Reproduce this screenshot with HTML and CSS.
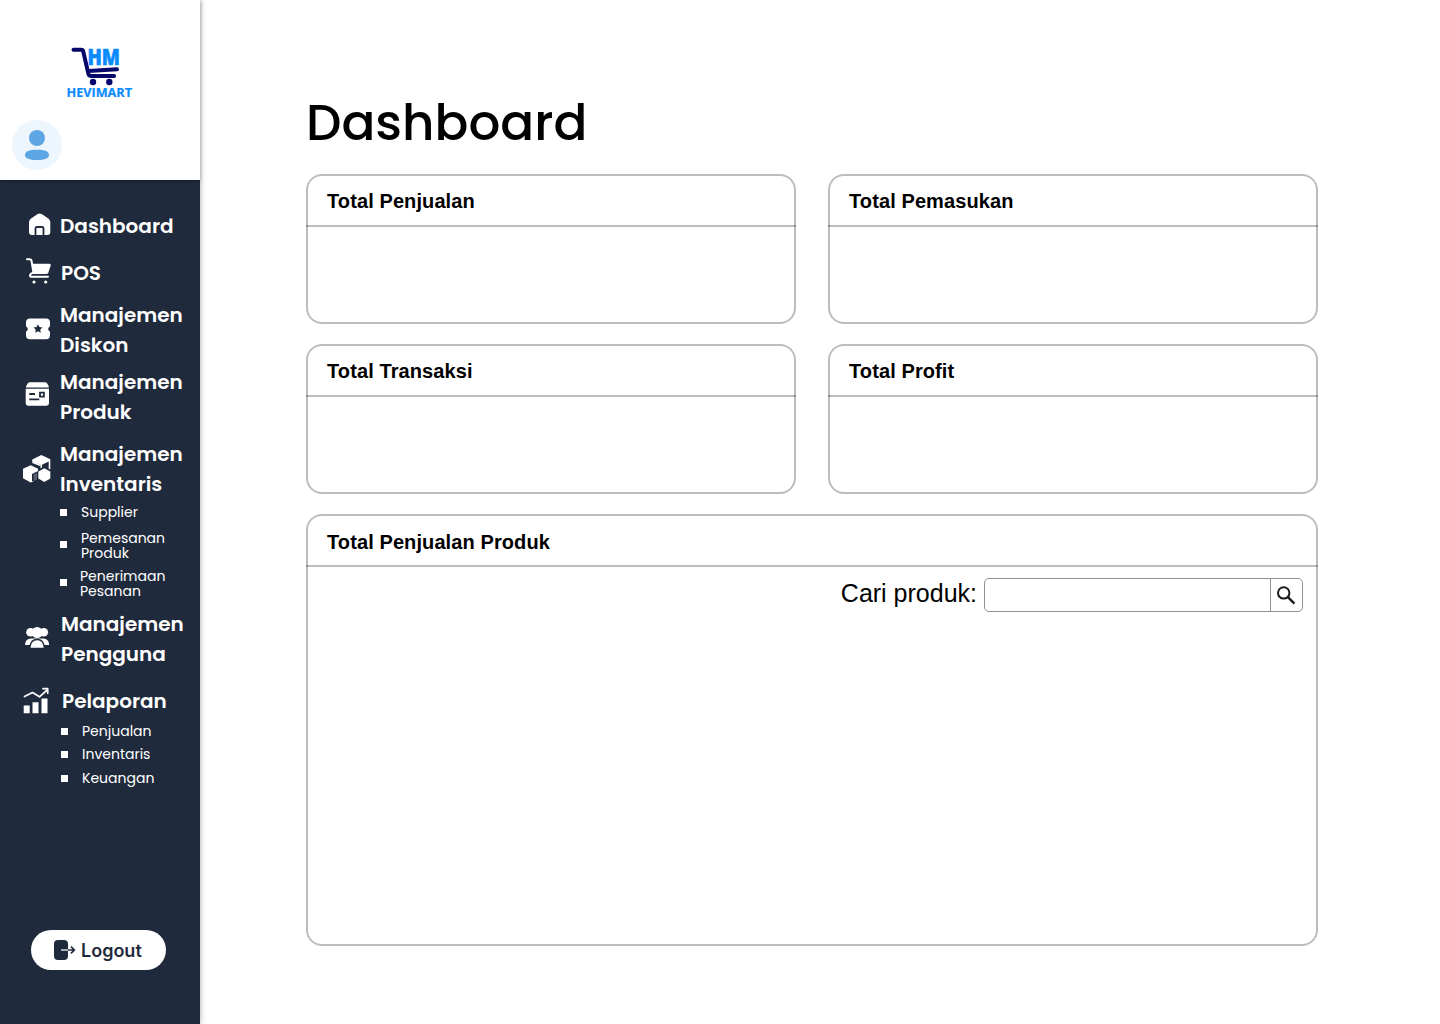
FILE: index.html
```html
<!DOCTYPE html>
<html lang="id">
<head>
<meta charset="utf-8">
<title>Hevimart - Dashboard</title>
<link rel="stylesheet" href="styles.css">
</head>
<body>
<div class="app">
  <aside class="sidebar">
    <header class="brand">
      <svg class="logo" viewBox="0 0 80 62" role="img" aria-label="Hevimart">
        <path d="M13.500 9.700h7.700q1.600 0 2 1.600l5.200 22.600q.5 2 2.400 2h23.300M28.600 31l28.400-1.700" fill="none" stroke="#07076b" stroke-width="4" stroke-linecap="round" stroke-linejoin="round"/>
        <circle cx="33" cy="42" r="3.200" fill="#07076b"/>
        <circle cx="49.300" cy="42" r="3.200" fill="#07076b"/>
        <text class="logo-mark" x="27.500" y="25.300" textLength="32.500" lengthAdjust="spacingAndGlyphs">HM</text>
        <text class="logo-name" x="6.500" y="57.200" textLength="65.500" lengthAdjust="spacingAndGlyphs">HEVIMART</text>
      </svg>
      <svg class="avatar" viewBox="0 0 50 50">
        <circle cx="25" cy="25" r="25" fill="#edf5fd"/>
        <circle cx="25" cy="18" r="8" fill="#5ca6e4"/>
        <path d="M13 35c0-3.500 4-5.200 12-5.200s12 1.700 12 5.200-4 5-12 5-12-1.500-12-5z" fill="#5ca6e4"/>
      </svg>
    </header>

    <nav class="nav">
      <a class="item">
        <svg class="icon" viewBox="0 0 36 30"><path fill="#fff" d="M17.700 3q2-1.200 4 0l6.600 4.400q2 1.400 2 3.800v9.800q0 3-3 3H12q-3 0-3-3v-9.800q0-2.400 2-3.800z"/><path class="cut" d="M15.500 24.500v-7q0-1.500 1.500-1.500h5q1.500 0 1.500 1.500v7"/></svg>
        <span class="label">Dashboard</span>
      </a>
      <a class="item item-pos">
        <svg class="icon" viewBox="0 0 36 30"><path fill="#fff" d="M11.500 5.700H29.500q1.700 0 1.200 1.700l-2.300 7.100q-.6 1.500-2.200 1.500H13.500z"/><path class="line" d="M7 1.200h2.700q1.400 0 1.800 1.400L13.500 15h-1q-2 .5-2.500 2.200 0 1.600 1.800 1.600H28"/><circle cx="14" cy="24" r="1.600" fill="#fff"/><circle cx="25.700" cy="24" r="1.600" fill="#fff"/></svg>
        <span class="label label-in">POS</span>
      </a>
      <a class="item item-diskon">
        <svg class="icon" viewBox="0 0 36 30"><path fill="#fff" d="M10 3.500h16q4 0 4 4v3.800l-1.700 1.700v2l1.700 1.700v3.600q0 4-4 4H10q-4 0-4-4v-3.600l1.700-1.700v-2L6 11.300V7.500q0-4 4-4z"/><path fill="#1f2a3c" d="M18 9.200l1.400 2.800 3.100.4-2.200 2.200.5 3.100-2.800-1.500-2.800 1.500.5-3.100-2.200-2.200 3.100-.4z"/></svg>
        <span class="label">Manajemen Diskon</span>
      </a>
      <a class="item item-produk">
        <svg class="icon" viewBox="0 0 36 30"><path fill="#fff" d="M10 .2h15q1.500 0 2.200 1.200l1.400 2.600.3 1.400H5.900l.3-1.400 1.500-2.600Q8.400.2 10 .2zM5.700 6.800H29v14.500q0 2.400-2.400 2.400H8.100q-2.400 0-2.400-2.400z"/><path class="cut" d="M9.300 12H15M9.300 17.300h10M20 10.600h3.900v4.100H20z"/></svg>
        <span class="label">Manajemen Produk</span>
      </a>
      <a class="item item-inventaris">
        <svg class="icon" viewBox="0 0 36 30"><path fill="#fff" d="M21.300 1L30.300 5.200V15.500L28.700 14.700V7.500L22 10.800V13.500l-1.500.8v-3.500L12.300 7V5.400z"/><path fill="#fff" d="M12.300 6.500l8.200 4.200v1.500L12.300 9zM10.700 11.200l7.300 3.500v2.200l-6 3v7l1.600.4-2.900 1.200L3 24.300v-9.500z"/><path fill="#fff" d="M13.600 20.500l3.400-1.700v6.700l-3.400 1.800z" opacity=".25"/><path fill="#fff" d="M24.300 14.300l6 3.200v7.100l-6 3.300-6-3.300v-7.100z"/></svg>
        <span class="label">Manajemen Inventaris</span>
      </a>
      <ul class="sub sub-inventaris">
        <li>Supplier</li>
        <li class="two-line">Pemesanan<br>Produk</li>
        <li class="two-line li-penerimaan">Penerimaan<br>Pesanan</li>
      </ul>
      <a class="item item-pengguna">
        <svg class="icon" viewBox="0 0 36 30"><g fill="#fff"><circle cx="10.500" cy="8.300" r="4.300"/><circle cx="23.800" cy="8.300" r="4.300"/><path d="M5 21q.3-6.500 6-6.500h12.200q5.700 0 6 6.500z"/></g><path d="M10.300 23.500q0-8 6.800-8t6.800 8z" fill="#1f2a3c" stroke="#1f2a3c" stroke-width="1.500"/><circle cx="17.100" cy="8.500" r="5.600" fill="#fff"/><path d="M10.500 23.700q.5-7.500 6.600-7.500t6.600 7.500z" fill="#fff"/></svg>
        <span class="label label-in">Manajemen Pengguna</span>
      </a>
      <a class="item item-pelaporan">
        <svg class="icon" viewBox="0 0 36 30"><path fill="#fff" d="M3.700 19.500h6v7.800h-6zM12.500 16.300h6v11h-6zM21.500 12.500h6v14.800h-6z"/><path class="line line-chart" d="M4.500 10.500l8-4 7 4.300L27.500 3.500M23 2.700h4.700v4.500"/></svg>
        <span class="label label-in2">Pelaporan</span>
      </a>
      <ul class="sub sub-pelaporan">
        <li>Penjualan</li>
        <li>Inventaris</li>
        <li class="li-keuangan">Keuangan</li>
      </ul>
    </nav>

    <button class="logout">
      <svg class="logout-icon" viewBox="0 0 22 22"><rect x="0" y="1" width="14" height="20" rx="4" fill="#1f2a3c"/><path d="M7 11h7" stroke="#c5c8cd" stroke-width="1.700"/><path d="M14 11h6M17 7.700l3.300 3.300-3.300 3.300" fill="none" stroke="#1f2a3c" stroke-width="1.700"/></svg>
      <span>Logout</span>
    </button>
  </aside>

  <main class="main">
    <h1 class="title">Dashboard</h1>
    <div class="cards">
      <section class="card"><h2 class="card-head">Total Penjualan</h2></section>
      <section class="card"><h2 class="card-head">Total Pemasukan</h2></section>
      <section class="card"><h2 class="card-head">Total Transaksi</h2></section>
      <section class="card"><h2 class="card-head">Total Profit</h2></section>
      <section class="card card-wide">
        <h2 class="card-head">Total Penjualan Produk</h2>
        <form class="search">
          <label class="search-label" for="q">Cari produk:</label>
          <div class="search-box">
            <input class="search-input" id="q" type="text">
            <button class="search-btn" type="button" aria-label="Cari">
              <svg viewBox="0 0 20 20" width="20" height="20"><circle cx="7.700" cy="7.900" r="5.700" fill="none" stroke="#1a1a1a" stroke-width="2"/><path d="M11.900 12.100l6.500 6.500" stroke="#1a1a1a" stroke-width="2.400"/></svg>
            </button>
          </div>
        </form>
      </section>
    </div>
  </main>
</div>
</body>
</html>
```
FILE: styles.css
```css
* { box-sizing: border-box; }
body { margin: 0; background: #fff; color: #000; font-family: Poppins, Inter, sans-serif; }
.app { display: flex; height: 1024px; }

.sidebar {
  display: flex; flex-direction: column; width: 200px; flex: none;
  background: #1f2a3c; box-shadow: 0 0 6px rgba(0, 0, 0, .35);
}
.brand {
  display: flex; flex-direction: column; height: 180px; padding: 40px 0 0 12px;
  background: #fff; box-shadow: 0 1px 4px rgba(0, 0, 0, .25);
}
.logo { width: 80px; height: 62px; margin-left: 48px; }
.logo text { fill: #0a8cff; }
.logo-mark { font: 800 22.500px "Open Sans", sans-serif; stroke: #0a8cff; stroke-width: .6px; }
.logo-name { font: 700 12.800px "Open Sans", sans-serif; stroke: #0a8cff; stroke-width: .2px; }
.avatar { width: 50px; height: 50px; margin-top: 18px; }

.nav { flex: 1; padding: 31px 0 0 20px; color: #fff; }
.item { display: flex; align-items: center; gap: 4px; }
.icon { width: 36px; height: 30px; flex: none; }
.icon .cut { fill: none; stroke: #1f2a3c; stroke-width: 1.800; }
.icon .line { fill: none; stroke: #fff; stroke-width: 2; stroke-linecap: round; stroke-linejoin: round; }
.icon .line-chart { stroke-width: 1.700; }
.label { width: 136px; font-size: 20px; font-weight: 600; line-height: 30px; }
.label-in { padding-left: 1px; }
.label-in2 { padding-left: 2px; }
.item-pos { margin-top: 17px; }
.item-diskon { margin-top: 12px; }
.item-produk { margin-top: 7px; }
.item-inventaris { margin-top: 12px; }
.item-pengguna { margin-top: 10px; }
.item-pelaporan { margin-top: 17px; }

.sub { display: flex; flex-direction: column; gap: 8px; margin: 0; padding: 0 0 0 40px; list-style: none; font-size: 14px; line-height: 15px; }
.sub li { display: flex; align-items: center; }
.sub li::before { content: ""; width: 7px; height: 7px; margin-right: 14px; background: #fff; }
.sub .two-line::before { margin-bottom: 4px; }
.sub .li-penerimaan::before { margin-right: 13px; }
.sub .li-keuangan { margin-top: 1px; }
.sub-inventaris { padding-top: 6px; }
.sub-inventaris li:nth-child(2) { margin-top: 3px; }
.sub-pelaporan { padding: 8px 0 0 41px; }

.logout {
  display: flex; align-items: center; gap: 5px; width: 135px; height: 40px; margin: 0 0 54px 31px; padding: 0 0 0 23px;
  border: 0; border-radius: 20px; background: #fff; color: #1f2a3c;
  font: 600 18px Inter, sans-serif;
}
.logout-icon { width: 22px; height: 22px; }

.main { width: 1118px; padding: 87px 0 0 106px; }
.title { margin: 0 0 15px; font-size: 50px; font-weight: 500; line-height: 72px; }
.cards { display: grid; grid-template-columns: 490px 490px; grid-template-rows: 150px 150px 432px; gap: 20px 32px; }
.card { border: 2px solid rgba(0, 0, 0, .26); border-radius: 16px; }
.card-wide { grid-column: 1 / 3; }
.card-head {
  height: 51px; margin: 0 -2px; padding: 0 21px; border-bottom: 2px solid rgba(0, 0, 0, .26);
  font: 700 20px/50px "Arial Rounded MT Bold", "Liberation Sans", sans-serif; letter-spacing: .1px;
}
.card-wide .card-head { line-height: 52px; }
.search { display: flex; align-items: center; justify-content: flex-end; gap: 7px; padding: 11px 13px 0 0; }
.search-label { padding-bottom: 4px; font: 25px/30px "Liberation Sans", sans-serif; }
.search-box { display: flex; width: 319px; height: 34px; border: 1px solid #8f8f8f; border-radius: 5px; }
.search-input { flex: 1; min-width: 0; padding: 0 8px; border: 0; background: none; font: 16px "Liberation Sans", sans-serif; }
.search-btn { display: flex; align-items: center; justify-content: center; width: 32px; padding: 0 1px 0 0; border: 0; border-left: 1px solid #8f8f8f; background: none; }
```
